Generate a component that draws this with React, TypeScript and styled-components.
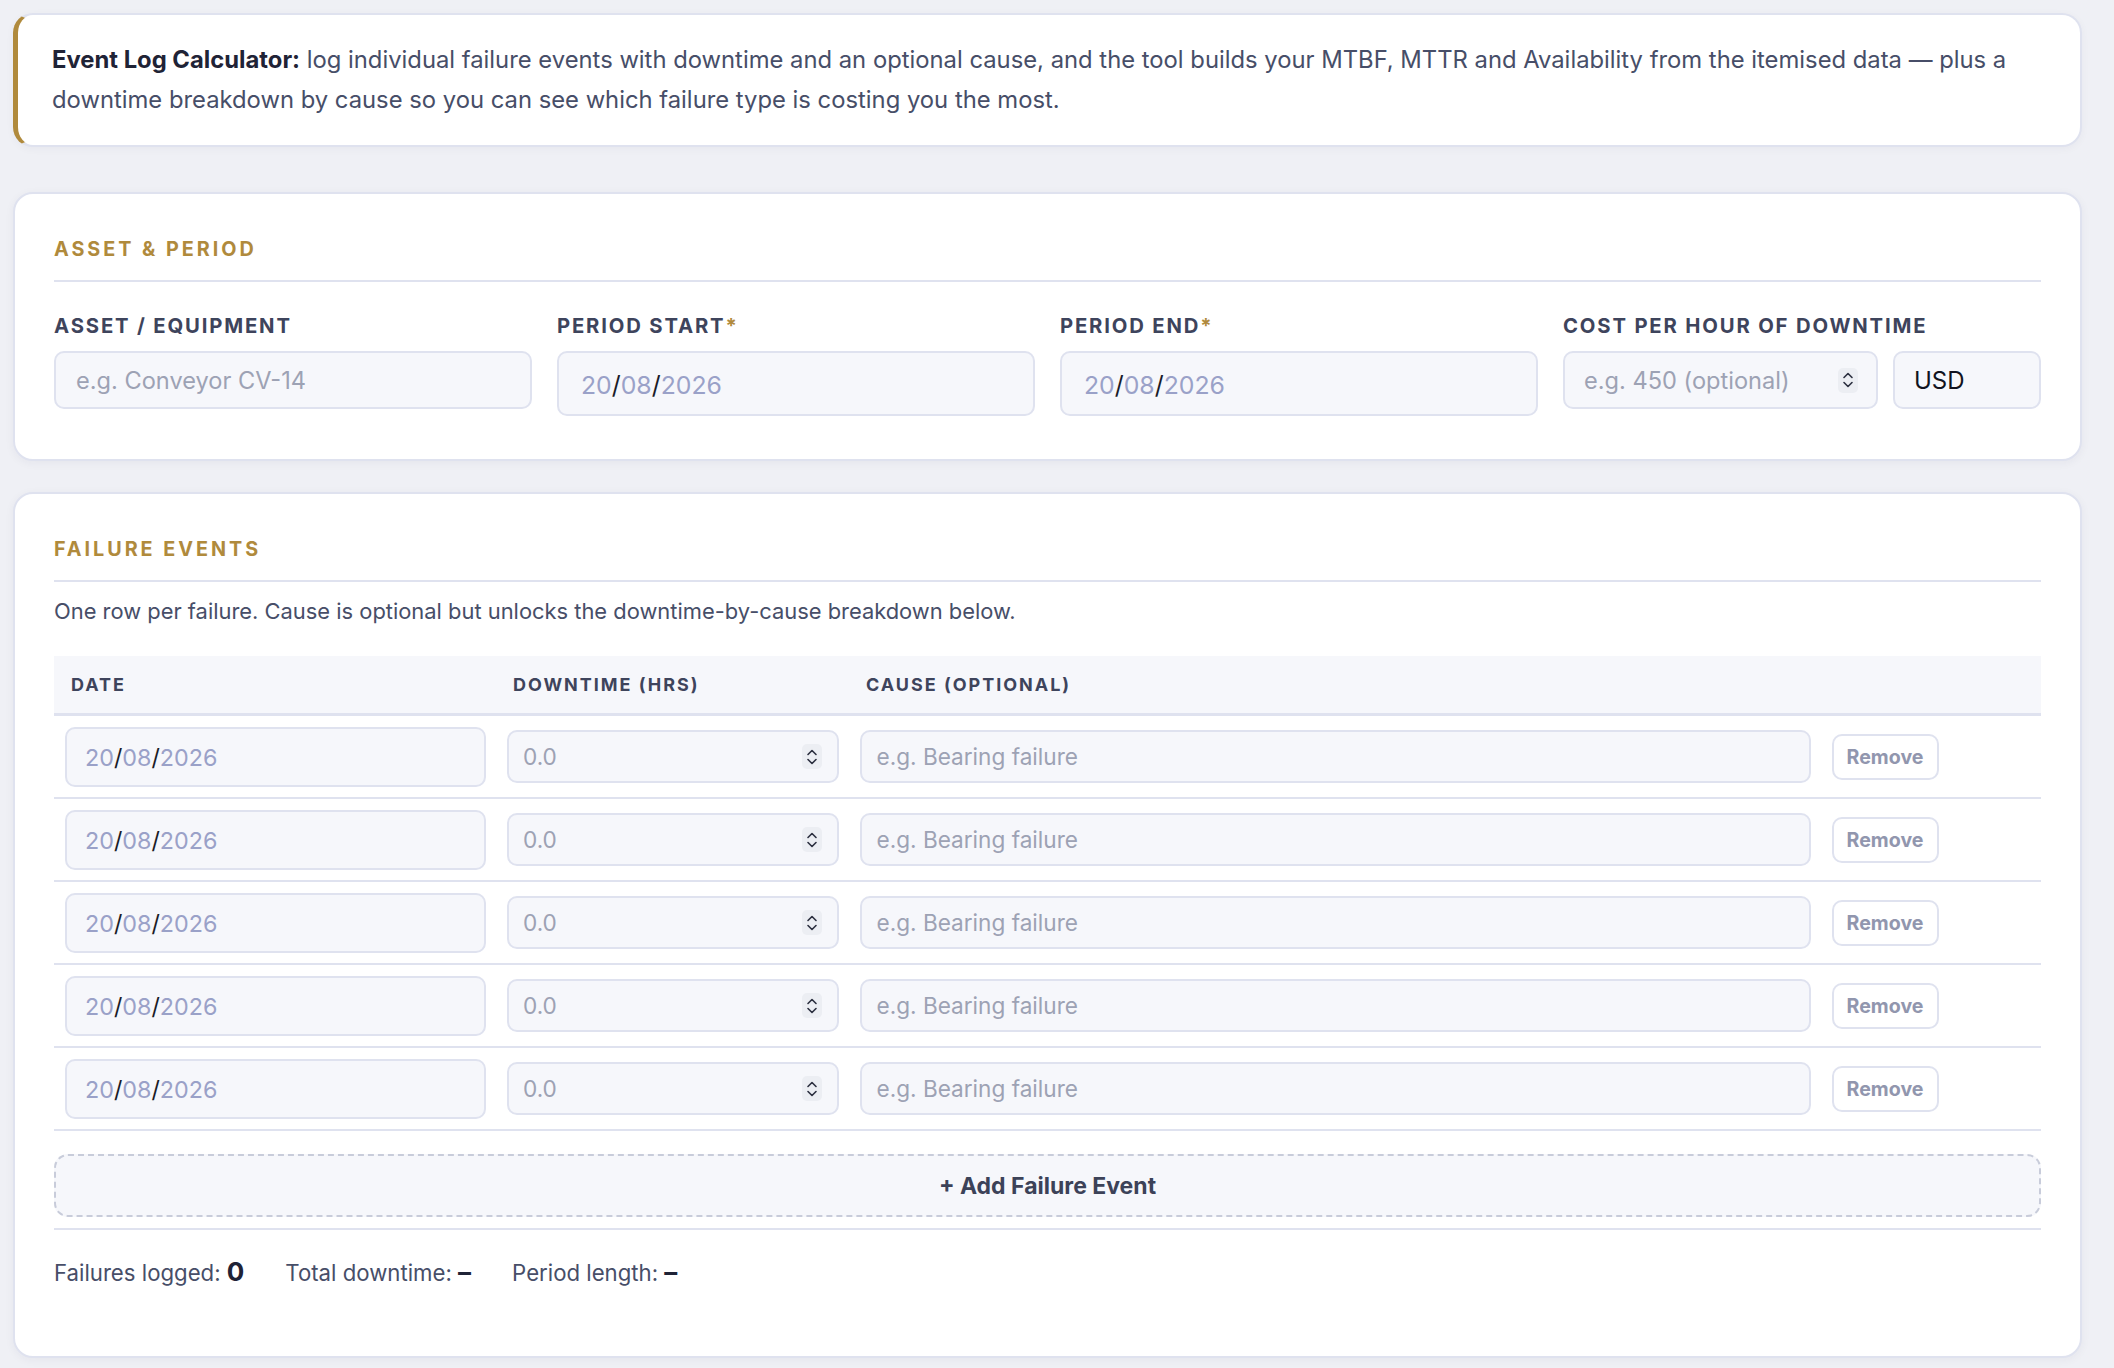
import styled, { createGlobalStyle } from 'styled-components';

const COLOR = {
  page: '#eff0f5',
  card: '#ffffff',
  border: '#dfe2ef',
  gold: '#b08a3c',
  ink: '#1f2336',
  text: '#474e68',
  label: '#3e445c',
  field: '#f6f7fb',
  placeholder: '#9da2b4',
  dateDigits: '#9aa1c8',
};

const GlobalStyle = createGlobalStyle`
  body {
    margin: 0;
    background: ${COLOR.page};
    font-family: Inter, "Noto Sans", sans-serif;
    color: ${COLOR.text};
  }
  * {
    box-sizing: border-box;
  }
`;

const rows = [1, 2, 3, 4, 5];

const DateValue = () => (
  <>
    <DatePart>20</DatePart>
    <Slash>/</Slash>
    <DatePart>08</DatePart>
    <Slash>/</Slash>
    <DatePart>2026</DatePart>
  </>
);

const Spinner = () => (
  <SpinBox>
    <svg width='12' height='18' viewBox='0 0 12 18' fill='none'>
      <path d='M2 6.5 L6 2.5 L10 6.5' stroke='#2b2f3f' strokeWidth='1.6' strokeLinecap='round' strokeLinejoin='round' />
      <path d='M2 11.5 L6 15.5 L10 11.5' stroke='#2b2f3f' strokeWidth='1.6' strokeLinecap='round' strokeLinejoin='round' />
    </svg>
  </SpinBox>
);

const App = () => {
  return (
    <>
      <GlobalStyle />
      <Page>
        <Intro>
          <strong>Event Log Calculator:</strong> log individual failure events with downtime and an
          optional cause, and the tool builds your MTBF, MTTR and Availability from the itemised data
          — plus a downtime breakdown by cause so you can see which failure type is costing you the
          most.
        </Intro>

        <Card gapAfter={31} padBottom={43}>
          <SectionTitle>Asset &amp; Period</SectionTitle>
          <FieldGrid>
            <Field>
              <Label>Asset / Equipment</Label>
              <TextInput placeholder='e.g. Conveyor CV-14' />
            </Field>
            <Field>
              <Label>
                Period Start<Req>*</Req>
              </Label>
              <DateBox>
                <DateValue />
              </DateBox>
            </Field>
            <Field>
              <Label>
                Period End<Req>*</Req>
              </Label>
              <DateBox>
                <DateValue />
              </DateBox>
            </Field>
            <Field>
              <Label>Cost per hour of downtime</Label>
              <CostRow>
                <NumberBox>
                  <BareInput placeholder='e.g. 450 (optional)' />
                  <Spinner />
                </NumberBox>
                <CurrencyBox>USD</CurrencyBox>
              </CostRow>
            </Field>
          </FieldGrid>
        </Card>

        <Card gapAfter={0} padBottom={37}>
          <SectionTitle>Failure Events</SectionTitle>
          <Hint>One row per failure. Cause is optional but unlocks the downtime-by-cause breakdown below.</Hint>
          <EventTable>
            <HeadRow>
              <HeadCell>Date</HeadCell>
              <HeadCell>Downtime (hrs)</HeadCell>
              <HeadCell>Cause (optional)</HeadCell>
              <HeadCell />
            </HeadRow>
            {rows.map(id => (
              <EventRow key={id}>
                <Cell>
                  <RowDate>
                    <DateValue />
                  </RowDate>
                </Cell>
                <Cell>
                  <RowNumber>
                    <BareInput small placeholder='0.0' />
                    <Spinner />
                  </RowNumber>
                </Cell>
                <Cell>
                  <RowText placeholder='e.g. Bearing failure' />
                </Cell>
                <Cell>
                  <RemoveButton>Remove</RemoveButton>
                </Cell>
              </EventRow>
            ))}
          </EventTable>
          <AddButton>+ Add Failure Event</AddButton>
          <Summary>
            <span>
              Failures logged: <Count>0</Count>
            </span>
            <span>
              Total downtime: <Dash>–</Dash>
            </span>
            <span>
              Period length: <Dash>–</Dash>
            </span>
          </Summary>
        </Card>
      </Page>
    </>
  );
};

export default App;

const Page = styled.div`
  padding: 13px 32px 13px 13px;
`;

const Intro = styled.div`
  background: ${COLOR.card};
  border: 2px solid ${COLOR.border};
  border-left: 5px solid ${COLOR.gold};
  border-radius: 20px;
  padding: 25px 40px 25px 34px;
  margin-bottom: 45px;
  font-size: 23.8px;
  line-height: 40px;
  color: ${COLOR.text};
  box-shadow: 0 2px 8px rgba(30, 35, 70, 0.04);
  strong {
    color: ${COLOR.ink};
    font-weight: 700;
  }
`;

const Card = styled.section<{ gapAfter: number; padBottom: number }>`
  background: ${COLOR.card};
  border: 2px solid ${COLOR.border};
  border-radius: 20px;
  padding: 42px 39px ${({ padBottom }) => padBottom}px 39px;
  margin-bottom: ${({ gapAfter }) => gapAfter}px;
  box-shadow: 0 2px 10px rgba(30, 35, 70, 0.05);
`;

const SectionTitle = styled.h2`
  margin: 0;
  padding-bottom: 18px;
  border-bottom: 2px solid ${COLOR.border};
  font-size: 19.8px;
  line-height: 26px;
  font-weight: 700;
  letter-spacing: 0.15em;
  text-transform: uppercase;
  color: ${COLOR.gold};
`;

const FieldGrid = styled.div`
  display: grid;
  grid-template-columns: repeat(4, minmax(0, 1fr));
  gap: 25px;
  margin-top: 31px;
  align-items: start;
`;

const Field = styled.div`
  display: flex;
  flex-direction: column;
  gap: 12px;
  min-width: 0;
`;

const Label = styled.label`
  font-size: 20.3px;
  line-height: 26px;
  font-weight: 700;
  letter-spacing: 0.09em;
  text-transform: uppercase;
  color: ${COLOR.label};
  white-space: nowrap;
`;

const Req = styled.span`
  color: ${COLOR.gold};
`;

const TextInput = styled.input`
  height: 58px;
  width: 100%;
  padding: 0 20px;
  background: ${COLOR.field};
  border: 2px solid ${COLOR.border};
  border-radius: 10px;
  font-family: inherit;
  font-size: 23.6px;
  color: ${COLOR.ink};
  outline: none;
  &::placeholder {
    color: ${COLOR.placeholder};
  }
`;

const DateBox = styled.div`
  height: 65px;
  display: flex;
  align-items: center;
  padding: 2px 22px 0;
  background: ${COLOR.field};
  border: 2px solid ${COLOR.border};
  border-radius: 10px;
  font-size: 24.8px;
`;

const DatePart = styled.span`
  color: ${COLOR.dateDigits};
`;

const Slash = styled.span`
  color: #1a1c28;
`;

const CostRow = styled.div`
  display: flex;
  gap: 15px;
  min-width: 0;
`;

const NumberBox = styled.div`
  flex: 1;
  min-width: 0;
  height: 58px;
  display: flex;
  align-items: center;
  padding: 0 18px 0 19px;
  background: ${COLOR.field};
  border: 2px solid ${COLOR.border};
  border-radius: 10px;
`;

const BareInput = styled.input<{ small?: boolean }>`
  flex: 1;
  min-width: 0;
  width: 0;
  border: none;
  background: transparent;
  padding: 0;
  font-family: inherit;
  font-size: ${({ small }) => (small ? '22.6px' : '23.6px')};
  color: ${COLOR.ink};
  outline: none;
  &::placeholder {
    color: ${COLOR.placeholder};
  }
`;

const SpinBox = styled.div`
  flex: none;
  width: 20px;
  height: 25px;
  border-radius: 5px;
  background: #eceef3;
  display: flex;
  align-items: center;
  justify-content: center;
`;

const CurrencyBox = styled.div`
  flex: none;
  width: 148px;
  height: 58px;
  display: flex;
  align-items: center;
  padding: 0 19px;
  background: ${COLOR.field};
  border: 2px solid ${COLOR.border};
  border-radius: 10px;
  font-size: 24px;
  color: #111320;
`;

const Hint = styled.p`
  margin: 15px 0 31px;
  font-size: 21.9px;
  line-height: 28px;
  color: ${COLOR.text};
`;

const EventTable = styled.div`
  display: flex;
  flex-direction: column;
`;

const columns = '442px 353px 972px 1fr';

const HeadRow = styled.div`
  display: grid;
  grid-template-columns: ${columns};
  height: 60px;
  align-items: center;
  background: ${COLOR.field};
  border-bottom: 3px solid ${COLOR.border};
`;

const HeadCell = styled.div`
  padding: 0 17px;
  font-size: 18px;
  font-weight: 700;
  letter-spacing: 0.11em;
  text-transform: uppercase;
  color: ${COLOR.label};
`;

const EventRow = styled.div`
  display: grid;
  grid-template-columns: ${columns};
  height: 83px;
  align-items: center;
  border-bottom: 2px solid ${COLOR.border};
`;

const Cell = styled.div`
  padding: 0 10.5px;
  display: flex;
  align-items: center;
  min-width: 0;
`;

const RowDate = styled.div`
  width: 100%;
  height: 60px;
  display: flex;
  align-items: center;
  padding: 2px 18.5px 0;
  background: ${COLOR.field};
  border: 2px solid ${COLOR.border};
  border-radius: 10px;
  font-size: 23.3px;
`;

const RowNumber = styled.div`
  width: 100%;
  height: 53px;
  display: flex;
  align-items: center;
  padding: 0 15px 0 14.5px;
  background: ${COLOR.field};
  border: 2px solid ${COLOR.border};
  border-radius: 10px;
`;

const RowText = styled.input`
  width: 100%;
  height: 53px;
  padding: 0 15px;
  background: ${COLOR.field};
  border: 2px solid ${COLOR.border};
  border-radius: 10px;
  font-family: inherit;
  font-size: 22.6px;
  color: ${COLOR.ink};
  outline: none;
  &::placeholder {
    color: ${COLOR.placeholder};
  }
`;

const RemoveButton = styled.button`
  width: 107px;
  height: 46px;
  padding: 0;
  background: #fff;
  border: 2px solid ${COLOR.border};
  border-radius: 10px;
  font-family: inherit;
  font-size: 19.6px;
  font-weight: 700;
  color: #9196ae;
  cursor: pointer;
`;

const AddButton = styled.button`
  margin-top: 23px;
  height: 63px;
  width: 100%;
  background: ${COLOR.field};
  border: 2px dashed #c8ccda;
  border-radius: 14px;
  font-family: inherit;
  font-size: 23px;
  font-weight: 700;
  color: #3c4258;
  cursor: pointer;
`;

const Summary = styled.div`
  margin-top: 11px;
  padding: 28px 0 32px;
  border-top: 2px solid ${COLOR.border};
  display: flex;
  gap: 41px;
  align-items: baseline;
  font-size: 22.2px;
  line-height: 28px;
  color: ${COLOR.text};
`;

const Count = styled.strong`
  font-size: 26px;
  color: ${COLOR.ink};
`;

const Dash = styled.strong`
  font-size: 26px;
  color: ${COLOR.ink};
`;
